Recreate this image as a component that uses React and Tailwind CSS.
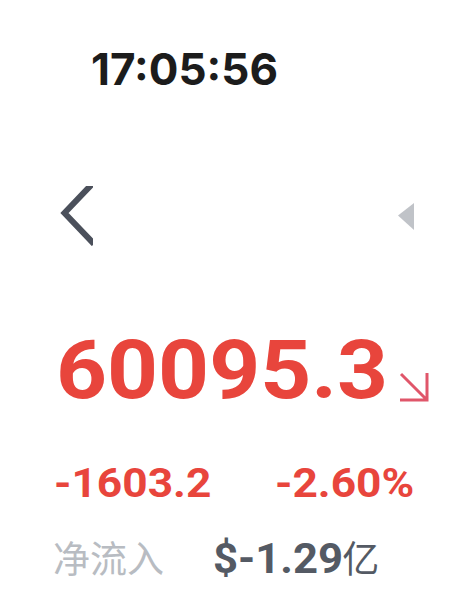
export default function App() {
  return (
    <div className="w-[452px] h-[613px] bg-white flex flex-col font-['Roboto',sans-serif] overflow-hidden">
      <div className="pt-[47px] pl-[91px] text-[44px] leading-none font-bold font-['Inter',sans-serif] text-[#1c1c1c]">
        17:05:56
      </div>
      <div className="mt-[95px] flex items-start pl-[60px] pr-[38px] h-[60px]">
        <svg width="33" height="60" viewBox="0 0 33 60">
          <polyline points="34,-4 4.5,27 34,58" fill="none" stroke="#4b505b" strokeWidth="6" strokeLinejoin="miter" />
        </svg>
        <svg className="ml-auto mt-[17px]" width="16" height="27" viewBox="0 0 16 27">
          <polygon points="16,0 0,12.5 16,27" fill="#c0c3c8" />
        </svg>
      </div>
      <div className="mt-[83px] pl-[56px] flex items-end">
        <span className="inline-block origin-left scale-x-[1.085] text-[82px] leading-none font-bold text-[#e8453c]">60095.3</span>
        <svg className="ml-[37px] mb-[8px]" width="31" height="31" viewBox="0 0 31 31">
          <path d="M2 2 L28 28 M28 1 V29.5 M1 28 H29.5" fill="none" stroke="#e0566a" strokeWidth="3" />
        </svg>
      </div>
      <div className="mt-[52px] pl-[54px] flex text-[41px] leading-none font-bold text-[#e8453c]">
        <span className="w-[221px]">
          <span className="inline-block origin-left scale-x-[1.08]">-1603.2</span>
        </span>
        <span className="inline-block origin-left scale-x-[1.08]">-2.60%</span>
      </div>
      <div className="mt-[34px] pl-[53px] flex items-baseline">
        <span className="w-[160px] text-[37px] leading-none text-[#b8bcc2] font-['Noto_Sans_CJK_SC',sans-serif]">净流入</span>
        <span className="inline-block origin-left scale-x-[1.04] mr-[4px] text-[42px] leading-none font-bold text-[#545a64]">$-1.29</span>
        <span className="text-[37px] leading-none text-[#545a64] font-['Noto_Sans_CJK_SC',sans-serif]">亿</span>
      </div>
    </div>
  );
}
